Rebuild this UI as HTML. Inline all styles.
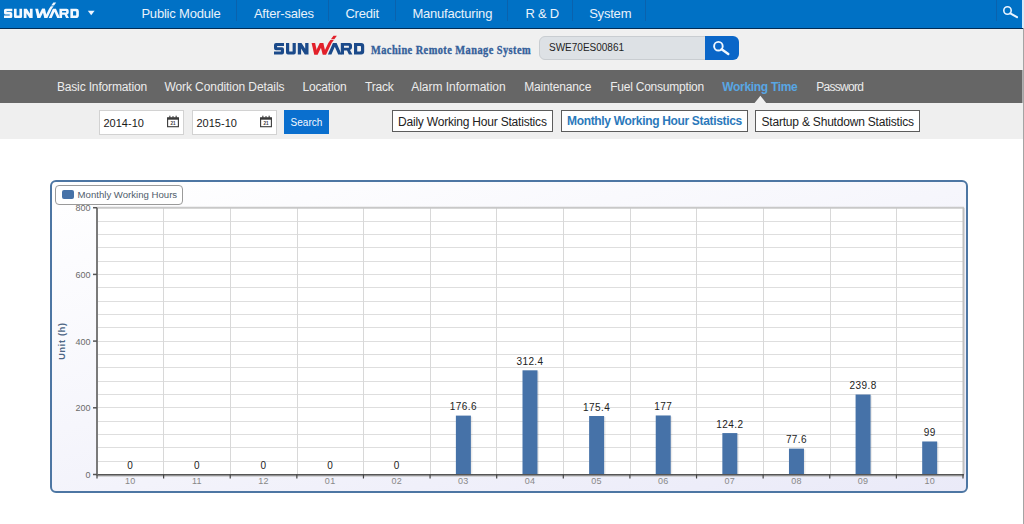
<!DOCTYPE html>
<html><head><meta charset="utf-8"><style>
html,body{margin:0;padding:0;width:1024px;height:524px;overflow:hidden;background:#fff;font-family:"Liberation Sans",sans-serif}
.t{position:absolute;white-space:nowrap}
.b{position:absolute;display:block}
</style></head><body>
<div class="b" style="left:0px;top:0px;width:1024px;height:28px;background:#0071c5"></div>
<div class="b" style="left:0px;top:28px;width:1024px;height:1px;background:#022c55"></div>
<svg class="b" style="left:4.00px;top:1.86px" width="75.53" height="16.60" viewBox="0 -8 91 20"><g fill="#f4f9ff" fill-rule="evenodd"><path d="M10,0 H2 Q0,0 0,2 V5.2 Q0,7.2 2,7.2 H6.9 V8.4 H0 V11.4 H8 Q10,11.4 10,9.4 V6.2 Q10,4.2 8,4.2 H3.1 V3.0 H10 Z"/><path d="M12,0 H15.2 V8.4 H18.6 V0 H21.8 V9.4 Q21.8,11.4 19.8,11.4 H14 Q12,11.4 12,9.4 Z"/><path d="M23.8,11.4 V0 H27.5 L31.2,5.8 V0 H34.5 V11.4 H30.8 L27.1,5.6 V11.4 Z"/><path d="M53.9,11.4 L58.9,0 H62.6 L67.6,11.4 H64.2 L60.8,3.8 L57.4,11.4 Z"/><path d="M66.8,11.4 V0 H75.5 Q78,0 78,2.5 V4.6 Q78,6.6 76,7.0 L78.4,11.4 H74.9 L73,7.4 H70 V11.4 Z M70,2.8 V4.8 H74.6 Q74.9,4.8 74.9,4.5 V3.1 Q74.9,2.8 74.6,2.8 Z"/><path d="M80,0 H87.2 Q90.2,0 90.2,3 V8.4 Q90.2,11.4 87.2,11.4 H80 Z M83.2,3 V8.4 H86.2 Q87,8.4 87,7.6 V3.8 Q87,3 86.2,3 Z"/></g><g fill="#f4f9ff"><path d="M37.6,0 H41.1 L43.7,11.4 H40.2 Z"/><path d="M40.2,11.4 H43.7 L49.3,0 H45.8 Z"/><path d="M45.8,0 H49.3 L52.1,11.4 H48.6 Z"/><path d="M48.8,11.4 H52.2 L57.6,0 L59.8,-3.0 H56.4 L54.3,0 Z"/><path d="M56.9,-3.7 H60.3 L62.9,-7.3 H59.5 Z"/></g></svg>
<svg class="b" style="left:86px;top:9px" width="10" height="8" viewBox="0 0 10 8"><path d="M1.8,1.8 H8.6 L5.2,6.2 Z" fill="#eef5ff"/></svg>
<div class="t" style="left:141.40px;top:6.60px;font-size:13px;line-height:13px;color:#e9f2fb;font-weight:normal;letter-spacing:-0.2px;font-family:'Liberation Sans', sans-serif;">Public Module</div>
<div class="t" style="left:253.90px;top:6.60px;font-size:13px;line-height:13px;color:#e9f2fb;font-weight:normal;letter-spacing:-0.2px;font-family:'Liberation Sans', sans-serif;">After-sales</div>
<div class="t" style="left:345.40px;top:6.60px;font-size:13px;line-height:13px;color:#e9f2fb;font-weight:normal;letter-spacing:-0.2px;font-family:'Liberation Sans', sans-serif;">Credit</div>
<div class="t" style="left:412.40px;top:6.60px;font-size:13px;line-height:13px;color:#e9f2fb;font-weight:normal;letter-spacing:-0.2px;font-family:'Liberation Sans', sans-serif;">Manufacturing</div>
<div class="t" style="left:525.40px;top:6.60px;font-size:13px;line-height:13px;color:#e9f2fb;font-weight:normal;letter-spacing:-0.2px;font-family:'Liberation Sans', sans-serif;">R &amp; D</div>
<div class="t" style="left:589.15px;top:6.60px;font-size:13px;line-height:13px;color:#e9f2fb;font-weight:normal;letter-spacing:-0.2px;font-family:'Liberation Sans', sans-serif;">System</div>
<div class="b" style="left:236px;top:0px;width:1px;height:21px;background:#0a62ad"></div>
<div class="b" style="left:328px;top:0px;width:1px;height:21px;background:#0a62ad"></div>
<div class="b" style="left:395px;top:0px;width:1px;height:21px;background:#0a62ad"></div>
<div class="b" style="left:507px;top:0px;width:1px;height:21px;background:#0a62ad"></div>
<div class="b" style="left:572px;top:0px;width:1px;height:21px;background:#0a62ad"></div>
<div class="b" style="left:645px;top:0px;width:1px;height:21px;background:#0a62ad"></div>
<div class="b" style="left:996px;top:0px;width:1px;height:21px;background:#0a62ad"></div>
<svg class="b" style="left:998px;top:0px" width="24" height="24" viewBox="0 0 24 24"><circle cx="9.5" cy="10.5" r="3.7" fill="none" stroke="#eaf4ff" stroke-width="1.6"/><path d="M12.3,13.3 L19,17.2" stroke="#eaf4ff" stroke-width="2.1" stroke-linecap="round"/></svg>
<div class="b" style="left:0px;top:29px;width:1024px;height:41px;background:#f0f0f0"></div>
<svg class="b" style="left:274.00px;top:35.30px" width="91.00" height="20.00" viewBox="0 -8 91 20"><g fill="#1b4a8a" fill-rule="evenodd"><path d="M10,0 H2 Q0,0 0,2 V5.2 Q0,7.2 2,7.2 H6.9 V8.4 H0 V11.4 H8 Q10,11.4 10,9.4 V6.2 Q10,4.2 8,4.2 H3.1 V3.0 H10 Z"/><path d="M12,0 H15.2 V8.4 H18.6 V0 H21.8 V9.4 Q21.8,11.4 19.8,11.4 H14 Q12,11.4 12,9.4 Z"/><path d="M23.8,11.4 V0 H27.5 L31.2,5.8 V0 H34.5 V11.4 H30.8 L27.1,5.6 V11.4 Z"/><path d="M53.9,11.4 L58.9,0 H62.6 L67.6,11.4 H64.2 L60.8,3.8 L57.4,11.4 Z"/><path d="M66.8,11.4 V0 H75.5 Q78,0 78,2.5 V4.6 Q78,6.6 76,7.0 L78.4,11.4 H74.9 L73,7.4 H70 V11.4 Z M70,2.8 V4.8 H74.6 Q74.9,4.8 74.9,4.5 V3.1 Q74.9,2.8 74.6,2.8 Z"/><path d="M80,0 H87.2 Q90.2,0 90.2,3 V8.4 Q90.2,11.4 87.2,11.4 H80 Z M83.2,3 V8.4 H86.2 Q87,8.4 87,7.6 V3.8 Q87,3 86.2,3 Z"/></g><g fill="#e2202a"><path d="M37.6,0 H41.1 L43.7,11.4 H40.2 Z"/><path d="M40.2,11.4 H43.7 L49.3,0 H45.8 Z"/><path d="M45.8,0 H49.3 L52.1,11.4 H48.6 Z"/><path d="M48.8,11.4 H52.2 L57.6,0 L59.8,-3.0 H56.4 L54.3,0 Z"/><path d="M56.9,-3.7 H60.3 L62.9,-7.3 H59.5 Z"/></g></svg>
<div class="t" style="left:371px;top:43.8px;font-size:14px;line-height:14px;color:#35609a;font-weight:bold;font-family:'Liberation Serif',serif;transform:scale(0.74,0.95);transform-origin:0 0;letter-spacing:0.6px;-webkit-text-stroke:0.4px #35609a">Machine Remote Manage System</div>
<div class="b" style="left:539px;top:36px;width:178px;height:23px;background:#dde1e5;border:1px solid #c9cdd1;border-radius:6px;box-sizing:border-box;height:24px"></div>
<div class="t" style="left:549.00px;top:43.44px;font-size:10px;line-height:10px;color:#1e1e1e;font-weight:normal;letter-spacing:0px;font-family:'Liberation Sans', sans-serif;">SWE70ES00861</div>
<div class="b" style="left:705px;top:36px;width:34px;height:24px;background:#0a66c8;border-radius:0 6px 6px 0"></div>
<svg class="b" style="left:705px;top:36px" width="34" height="24" viewBox="0 0 34 24"><circle cx="13.4" cy="10.2" r="4.3" fill="none" stroke="#f2f8ff" stroke-width="1.9"/><path d="M16.6,13.2 L23.3,18" stroke="#f2f8ff" stroke-width="2.4" stroke-linecap="round"/></svg>
<div class="b" style="left:0px;top:70px;width:1024px;height:33px;background:#666666"></div>
<div class="t" style="left:56.90px;top:80.84px;font-size:12px;line-height:12px;color:#ececec;font-weight:normal;letter-spacing:-0.15px;font-family:'Liberation Sans', sans-serif;">Basic Information</div>
<div class="t" style="left:164.40px;top:80.84px;font-size:12px;line-height:12px;color:#ececec;font-weight:normal;letter-spacing:-0.08px;font-family:'Liberation Sans', sans-serif;">Work Condition Details</div>
<div class="t" style="left:302.40px;top:80.84px;font-size:12px;line-height:12px;color:#ececec;font-weight:normal;letter-spacing:-0.15px;font-family:'Liberation Sans', sans-serif;">Location</div>
<div class="t" style="left:364.90px;top:80.84px;font-size:12px;line-height:12px;color:#ececec;font-weight:normal;letter-spacing:-0.15px;font-family:'Liberation Sans', sans-serif;">Track</div>
<div class="t" style="left:411.15px;top:80.84px;font-size:12px;line-height:12px;color:#ececec;font-weight:normal;letter-spacing:-0.01px;font-family:'Liberation Sans', sans-serif;">Alarm Information</div>
<div class="t" style="left:524.15px;top:80.84px;font-size:12px;line-height:12px;color:#ececec;font-weight:normal;letter-spacing:-0.15px;font-family:'Liberation Sans', sans-serif;">Maintenance</div>
<div class="t" style="left:610.15px;top:80.84px;font-size:12px;line-height:12px;color:#ececec;font-weight:normal;letter-spacing:-0.22px;font-family:'Liberation Sans', sans-serif;">Fuel Consumption</div>
<div class="t" style="left:816.15px;top:80.84px;font-size:12px;line-height:12px;color:#ececec;font-weight:normal;letter-spacing:-0.7px;font-family:'Liberation Sans', sans-serif;">Password</div>
<div class="t" style="left:722.20px;top:80.84px;font-size:12px;line-height:12px;color:#58a6e4;font-weight:bold;letter-spacing:-0.3px;font-family:'Liberation Sans', sans-serif;">Working Time</div>
<svg class="b" style="left:753px;top:95px" width="16" height="8" viewBox="0 0 16 8"><path d="M1.6,8 L7.4,0.8 L13.2,8 Z" fill="#f0f0f0"/></svg>
<div class="b" style="left:0px;top:103px;width:1024px;height:36px;background:#efefef"></div>
<div class="b" style="left:99px;top:110px;width:85px;height:25px;background:#fff;border:1px solid #d2d2d2;box-sizing:border-box"></div>
<div class="t" style="left:103.50px;top:118.29px;font-size:11px;line-height:11px;color:#1a1a1a;font-weight:normal;letter-spacing:0px;font-family:'Liberation Sans', sans-serif;">2014-10</div>
<svg class="b" style="left:167px;top:115px" width="13" height="13" viewBox="0 0 13 13"><rect x="0.6" y="3.1" width="10.8" height="8.6" fill="none" stroke="#3a3a3a" stroke-width="1.1"/><rect x="0.1" y="2.4" width="11.8" height="2.3" fill="#3a3a3a"/><rect x="2.3" y="0.7" width="1.1" height="2.2" fill="#3a3a3a"/><rect x="5.5" y="1.0" width="1.0" height="1.8" fill="#3a3a3a"/><rect x="8.6" y="0.7" width="1.1" height="2.2" fill="#3a3a3a"/><text x="6" y="9.9" font-size="4.6" font-weight="bold" text-anchor="middle" fill="#3a3a3a" font-family="Liberation Sans">21</text></svg>
<div class="b" style="left:192px;top:110px;width:85px;height:25px;background:#fff;border:1px solid #d2d2d2;box-sizing:border-box"></div>
<div class="t" style="left:196.50px;top:118.29px;font-size:11px;line-height:11px;color:#1a1a1a;font-weight:normal;letter-spacing:0px;font-family:'Liberation Sans', sans-serif;">2015-10</div>
<svg class="b" style="left:260px;top:115px" width="13" height="13" viewBox="0 0 13 13"><rect x="0.6" y="3.1" width="10.8" height="8.6" fill="none" stroke="#3a3a3a" stroke-width="1.1"/><rect x="0.1" y="2.4" width="11.8" height="2.3" fill="#3a3a3a"/><rect x="2.3" y="0.7" width="1.1" height="2.2" fill="#3a3a3a"/><rect x="5.5" y="1.0" width="1.0" height="1.8" fill="#3a3a3a"/><rect x="8.6" y="0.7" width="1.1" height="2.2" fill="#3a3a3a"/><text x="6" y="9.9" font-size="4.6" font-weight="bold" text-anchor="middle" fill="#3a3a3a" font-family="Liberation Sans">21</text></svg>
<div class="b" style="left:284px;top:110px;width:45px;height:24px;background:#0a6fce"></div>
<div class="t" style="left:290.60px;top:117.83px;font-size:10px;line-height:10px;color:#f4f9ff;font-weight:normal;letter-spacing:0px;font-family:'Liberation Sans', sans-serif;">Search</div>
<div class="b" style="left:392px;top:110px;width:161px;height:22px;background:#fff;border:1px solid #5c5c5c;box-sizing:border-box"></div>
<div class="t" style="left:398.00px;top:116.04px;font-size:12px;line-height:12px;color:#222;font-weight:normal;letter-spacing:-0.2px;font-family:'Liberation Sans', sans-serif;">Daily Working Hour Statistics</div>
<div class="b" style="left:561px;top:110px;width:187px;height:22px;background:#fff;border:1px solid #5c5c5c;box-sizing:border-box"></div>
<div class="t" style="left:567.00px;top:115.14px;font-size:12px;line-height:12px;color:#2b79bb;font-weight:bold;letter-spacing:-0.33px;font-family:'Liberation Sans', sans-serif;">Monthly Working Hour Statistics</div>
<div class="b" style="left:755px;top:110px;width:165px;height:22px;background:#fff;border:1px solid #5c5c5c;box-sizing:border-box"></div>
<div class="t" style="left:761.50px;top:116.04px;font-size:12px;line-height:12px;color:#222;font-weight:normal;letter-spacing:-0.2px;font-family:'Liberation Sans', sans-serif;">Startup &amp; Shutdown Statistics</div>
<div class="b" style="left:1022px;top:0px;width:2px;height:28px;background:#d5eafa"></div>
<div class="b" style="left:1022px;top:70px;width:1px;height:33px;background:#b0b0b0"></div>
<div class="b" style="left:1023px;top:28px;width:1px;height:496px;background:#a4a4a4"></div>
<div class="b" style="left:50px;top:180px;width:918px;height:313px;border:2px solid #4d76a3;border-radius:6px;box-sizing:border-box;background:linear-gradient(165deg,#ffffff 0%,#f6f6fc 45%,#eaeaf8 100%)"></div>
<div class="b" style="left:97px;top:207px;width:866px;height:268px;background:#fff"></div>
<svg class="b" style="left:0;top:0" width="1024" height="524"><line x1="97" x2="963" y1="474.50" y2="474.50" stroke="#dedede" stroke-width="1"/><line x1="97" x2="963" y1="461.50" y2="461.50" stroke="#dedede" stroke-width="1"/><line x1="97" x2="963" y1="447.50" y2="447.50" stroke="#dedede" stroke-width="1"/><line x1="97" x2="963" y1="434.50" y2="434.50" stroke="#dedede" stroke-width="1"/><line x1="97" x2="963" y1="421.50" y2="421.50" stroke="#dedede" stroke-width="1"/><line x1="97" x2="963" y1="407.50" y2="407.50" stroke="#dedede" stroke-width="1"/><line x1="97" x2="963" y1="394.50" y2="394.50" stroke="#dedede" stroke-width="1"/><line x1="97" x2="963" y1="381.50" y2="381.50" stroke="#dedede" stroke-width="1"/><line x1="97" x2="963" y1="367.50" y2="367.50" stroke="#dedede" stroke-width="1"/><line x1="97" x2="963" y1="354.50" y2="354.50" stroke="#dedede" stroke-width="1"/><line x1="97" x2="963" y1="341.50" y2="341.50" stroke="#dedede" stroke-width="1"/><line x1="97" x2="963" y1="327.50" y2="327.50" stroke="#dedede" stroke-width="1"/><line x1="97" x2="963" y1="314.50" y2="314.50" stroke="#dedede" stroke-width="1"/><line x1="97" x2="963" y1="301.50" y2="301.50" stroke="#dedede" stroke-width="1"/><line x1="97" x2="963" y1="287.50" y2="287.50" stroke="#dedede" stroke-width="1"/><line x1="97" x2="963" y1="274.50" y2="274.50" stroke="#dedede" stroke-width="1"/><line x1="97" x2="963" y1="261.50" y2="261.50" stroke="#dedede" stroke-width="1"/><line x1="97" x2="963" y1="247.50" y2="247.50" stroke="#dedede" stroke-width="1"/><line x1="97" x2="963" y1="234.50" y2="234.50" stroke="#dedede" stroke-width="1"/><line x1="97" x2="963" y1="221.50" y2="221.50" stroke="#dedede" stroke-width="1"/><line x1="97" x2="963" y1="207.50" y2="207.50" stroke="#dedede" stroke-width="1"/><line x1="163.50" x2="163.50" y1="207.7" y2="474.5" stroke="#d8d8d8" stroke-width="1"/><line x1="230.50" x2="230.50" y1="207.7" y2="474.5" stroke="#d8d8d8" stroke-width="1"/><line x1="297.50" x2="297.50" y1="207.7" y2="474.5" stroke="#d8d8d8" stroke-width="1"/><line x1="363.50" x2="363.50" y1="207.7" y2="474.5" stroke="#d8d8d8" stroke-width="1"/><line x1="430.50" x2="430.50" y1="207.7" y2="474.5" stroke="#d8d8d8" stroke-width="1"/><line x1="496.50" x2="496.50" y1="207.7" y2="474.5" stroke="#d8d8d8" stroke-width="1"/><line x1="563.50" x2="563.50" y1="207.7" y2="474.5" stroke="#d8d8d8" stroke-width="1"/><line x1="630.50" x2="630.50" y1="207.7" y2="474.5" stroke="#d8d8d8" stroke-width="1"/><line x1="696.50" x2="696.50" y1="207.7" y2="474.5" stroke="#d8d8d8" stroke-width="1"/><line x1="763.50" x2="763.50" y1="207.7" y2="474.5" stroke="#d8d8d8" stroke-width="1"/><line x1="830.50" x2="830.50" y1="207.7" y2="474.5" stroke="#d8d8d8" stroke-width="1"/><line x1="896.50" x2="896.50" y1="207.7" y2="474.5" stroke="#d8d8d8" stroke-width="1"/><line x1="97" x2="964" y1="207.7" y2="207.7" stroke="#c8c8c8" stroke-width="2"/><line x1="963.5" x2="963.5" y1="207.7" y2="474.5" stroke="#c0c0c0" stroke-width="2"/><rect x="457.38" y="416.60" width="15" height="58.90" fill="#000" opacity="0.08"/><rect x="455.88" y="415.60" width="15" height="58.90" fill="#4672a8"/><rect x="524.00" y="371.31" width="15" height="104.19" fill="#000" opacity="0.08"/><rect x="522.50" y="370.31" width="15" height="104.19" fill="#4672a8"/><rect x="590.62" y="417.00" width="15" height="58.50" fill="#000" opacity="0.08"/><rect x="589.12" y="416.00" width="15" height="58.50" fill="#4672a8"/><rect x="657.23" y="416.47" width="15" height="59.03" fill="#000" opacity="0.08"/><rect x="655.73" y="415.47" width="15" height="59.03" fill="#4672a8"/><rect x="723.85" y="434.08" width="15" height="41.42" fill="#000" opacity="0.08"/><rect x="722.35" y="433.08" width="15" height="41.42" fill="#4672a8"/><rect x="790.46" y="449.62" width="15" height="25.88" fill="#000" opacity="0.08"/><rect x="788.96" y="448.62" width="15" height="25.88" fill="#4672a8"/><rect x="857.08" y="395.53" width="15" height="79.97" fill="#000" opacity="0.08"/><rect x="855.58" y="394.53" width="15" height="79.97" fill="#4672a8"/><rect x="923.69" y="442.48" width="15" height="33.02" fill="#000" opacity="0.08"/><rect x="922.19" y="441.48" width="15" height="33.02" fill="#4672a8"/><line x1="97" x2="964" y1="474.8" y2="474.8" stroke="#555" stroke-width="1.7"/><line x1="97" x2="964" y1="476.2" y2="476.2" stroke="#c4c4c4" stroke-width="1"/><line x1="97" x2="97" y1="207.7" y2="475.5" stroke="#7a7a7a" stroke-width="2"/><line x1="97.00" x2="97.00" y1="474.5" y2="478.5" stroke="#444" stroke-width="1.2"/><line x1="163.62" x2="163.62" y1="474.5" y2="478.5" stroke="#444" stroke-width="1.2"/><line x1="230.23" x2="230.23" y1="474.5" y2="478.5" stroke="#444" stroke-width="1.2"/><line x1="296.85" x2="296.85" y1="474.5" y2="478.5" stroke="#444" stroke-width="1.2"/><line x1="363.46" x2="363.46" y1="474.5" y2="478.5" stroke="#444" stroke-width="1.2"/><line x1="430.08" x2="430.08" y1="474.5" y2="478.5" stroke="#444" stroke-width="1.2"/><line x1="496.69" x2="496.69" y1="474.5" y2="478.5" stroke="#444" stroke-width="1.2"/><line x1="563.31" x2="563.31" y1="474.5" y2="478.5" stroke="#444" stroke-width="1.2"/><line x1="629.92" x2="629.92" y1="474.5" y2="478.5" stroke="#444" stroke-width="1.2"/><line x1="696.54" x2="696.54" y1="474.5" y2="478.5" stroke="#444" stroke-width="1.2"/><line x1="763.15" x2="763.15" y1="474.5" y2="478.5" stroke="#444" stroke-width="1.2"/><line x1="829.77" x2="829.77" y1="474.5" y2="478.5" stroke="#444" stroke-width="1.2"/><line x1="896.38" x2="896.38" y1="474.5" y2="478.5" stroke="#444" stroke-width="1.2"/><line x1="963.00" x2="963.00" y1="474.5" y2="478.5" stroke="#444" stroke-width="1.2"/><line x1="93" x2="97" y1="474.50" y2="474.50" stroke="#555" stroke-width="1.5"/><line x1="93" x2="97" y1="407.80" y2="407.80" stroke="#555" stroke-width="1.5"/><line x1="93" x2="97" y1="341.10" y2="341.10" stroke="#555" stroke-width="1.5"/><line x1="93" x2="97" y1="274.40" y2="274.40" stroke="#555" stroke-width="1.5"/><line x1="93" x2="97" y1="207.70" y2="207.70" stroke="#555" stroke-width="1.5"/></svg>
<div class="t" style="left:30.31px;width:200px;text-align:center;top:461.04px;font-size:10px;line-height:10px;color:#222;font-weight:normal;letter-spacing:0.4px;">0</div>
<div class="t" style="left:30.31px;width:200px;text-align:center;top:476.68px;font-size:9px;line-height:9px;color:#888;font-weight:normal;letter-spacing:0.3px;">10</div>
<div class="t" style="left:96.92px;width:200px;text-align:center;top:461.04px;font-size:10px;line-height:10px;color:#222;font-weight:normal;letter-spacing:0.4px;">0</div>
<div class="t" style="left:96.92px;width:200px;text-align:center;top:476.68px;font-size:9px;line-height:9px;color:#888;font-weight:normal;letter-spacing:0.3px;">11</div>
<div class="t" style="left:163.54px;width:200px;text-align:center;top:461.04px;font-size:10px;line-height:10px;color:#222;font-weight:normal;letter-spacing:0.4px;">0</div>
<div class="t" style="left:163.54px;width:200px;text-align:center;top:476.68px;font-size:9px;line-height:9px;color:#888;font-weight:normal;letter-spacing:0.3px;">12</div>
<div class="t" style="left:230.15px;width:200px;text-align:center;top:461.04px;font-size:10px;line-height:10px;color:#222;font-weight:normal;letter-spacing:0.4px;">0</div>
<div class="t" style="left:230.15px;width:200px;text-align:center;top:476.68px;font-size:9px;line-height:9px;color:#888;font-weight:normal;letter-spacing:0.3px;">01</div>
<div class="t" style="left:296.77px;width:200px;text-align:center;top:461.04px;font-size:10px;line-height:10px;color:#222;font-weight:normal;letter-spacing:0.4px;">0</div>
<div class="t" style="left:296.77px;width:200px;text-align:center;top:476.68px;font-size:9px;line-height:9px;color:#888;font-weight:normal;letter-spacing:0.3px;">02</div>
<div class="t" style="left:363.38px;width:200px;text-align:center;top:402.14px;font-size:10px;line-height:10px;color:#222;font-weight:normal;letter-spacing:0.4px;">176.6</div>
<div class="t" style="left:363.38px;width:200px;text-align:center;top:476.68px;font-size:9px;line-height:9px;color:#888;font-weight:normal;letter-spacing:0.3px;">03</div>
<div class="t" style="left:430.00px;width:200px;text-align:center;top:356.85px;font-size:10px;line-height:10px;color:#222;font-weight:normal;letter-spacing:0.4px;">312.4</div>
<div class="t" style="left:430.00px;width:200px;text-align:center;top:476.68px;font-size:9px;line-height:9px;color:#888;font-weight:normal;letter-spacing:0.3px;">04</div>
<div class="t" style="left:496.62px;width:200px;text-align:center;top:402.54px;font-size:10px;line-height:10px;color:#222;font-weight:normal;letter-spacing:0.4px;">175.4</div>
<div class="t" style="left:496.62px;width:200px;text-align:center;top:476.68px;font-size:9px;line-height:9px;color:#888;font-weight:normal;letter-spacing:0.3px;">05</div>
<div class="t" style="left:563.23px;width:200px;text-align:center;top:402.01px;font-size:10px;line-height:10px;color:#222;font-weight:normal;letter-spacing:0.4px;">177</div>
<div class="t" style="left:563.23px;width:200px;text-align:center;top:476.68px;font-size:9px;line-height:9px;color:#888;font-weight:normal;letter-spacing:0.3px;">06</div>
<div class="t" style="left:629.85px;width:200px;text-align:center;top:419.61px;font-size:10px;line-height:10px;color:#222;font-weight:normal;letter-spacing:0.4px;">124.2</div>
<div class="t" style="left:629.85px;width:200px;text-align:center;top:476.68px;font-size:9px;line-height:9px;color:#888;font-weight:normal;letter-spacing:0.3px;">07</div>
<div class="t" style="left:696.46px;width:200px;text-align:center;top:435.16px;font-size:10px;line-height:10px;color:#222;font-weight:normal;letter-spacing:0.4px;">77.6</div>
<div class="t" style="left:696.46px;width:200px;text-align:center;top:476.68px;font-size:9px;line-height:9px;color:#888;font-weight:normal;letter-spacing:0.3px;">08</div>
<div class="t" style="left:763.08px;width:200px;text-align:center;top:381.06px;font-size:10px;line-height:10px;color:#222;font-weight:normal;letter-spacing:0.4px;">239.8</div>
<div class="t" style="left:763.08px;width:200px;text-align:center;top:476.68px;font-size:9px;line-height:9px;color:#888;font-weight:normal;letter-spacing:0.3px;">09</div>
<div class="t" style="left:829.69px;width:200px;text-align:center;top:428.02px;font-size:10px;line-height:10px;color:#222;font-weight:normal;letter-spacing:0.4px;">99</div>
<div class="t" style="left:829.69px;width:200px;text-align:center;top:476.68px;font-size:9px;line-height:9px;color:#888;font-weight:normal;letter-spacing:0.3px;">10</div>
<div class="t" style="left:40px;width:50.5px;text-align:right;top:470.98px;font-size:9px;line-height:9px;color:#6a6a6a">0</div>
<div class="t" style="left:40px;width:50.5px;text-align:right;top:404.28px;font-size:9px;line-height:9px;color:#6a6a6a">200</div>
<div class="t" style="left:40px;width:50.5px;text-align:right;top:337.58px;font-size:9px;line-height:9px;color:#6a6a6a">400</div>
<div class="t" style="left:40px;width:50.5px;text-align:right;top:270.88px;font-size:9px;line-height:9px;color:#6a6a6a">600</div>
<div class="t" style="left:40px;width:50.5px;text-align:right;top:204.18px;font-size:9px;line-height:9px;color:#6a6a6a">800</div>
<div class="t" style="left:62.3px;top:341.1px;font-size:9px;line-height:9px;color:#4d6685;font-weight:bold;transform:translate(-50%,-50%) rotate(-90deg);letter-spacing:0.75px">Unit (h)</div>
<div class="b" style="left:55px;top:185px;width:128px;height:20px;background:#fff;border:1px solid #9a9a9a;border-radius:4px;box-sizing:border-box"></div>
<div class="b" style="left:61.5px;top:190px;width:12.5px;height:9px;background:#4672a8;border-radius:2px"></div>
<div class="t" style="left:77.60px;top:190.17px;font-size:9.6px;line-height:9.6px;color:#505d6c;font-weight:normal;letter-spacing:0px;font-family:'Liberation Sans', sans-serif;">Monthly Working Hours</div>
</body></html>
